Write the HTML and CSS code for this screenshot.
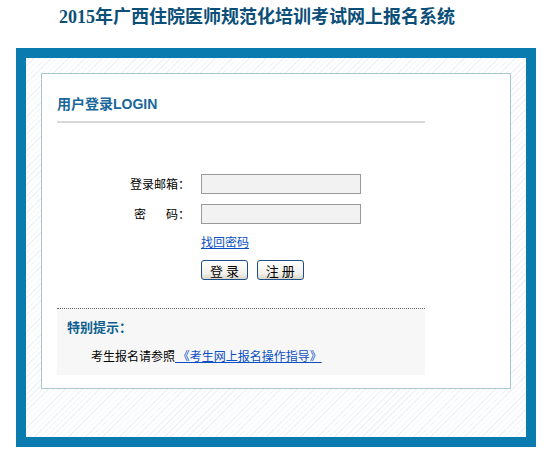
FILE: index.html
```html
<!DOCTYPE html>
<html lang="zh-CN">
<head>
  <meta charset="UTF-8" />
  <title>2015年广西住院医师规范化培训考试网上报名系统</title>
  <link rel="stylesheet" href="styles.css">
</head>
<body>

  <h1 class="title">2015年广西住院医师规范化培训考试网上报名系统</h1>

  <div class="frame">
    <div class="panel">
      <div class="box">
        <h2 class="box-head">用户登录LOGIN</h2>

        <form class="login">
          <div class="row">
            <label for="email">登录邮箱：</label>
            <input type="text" id="email" />
          </div>
          <div class="row">
            <label for="pwd" class="spread">密<span class="gap"></span>码：</label>
            <input type="password" id="pwd" />
          </div>
          <div class="row forgot">
            <span></span>
            <a href="#" class="link">找回密码</a>
          </div>
          <div class="row buttons">
            <span></span>
            <div>
              <button type="button" class="btn">登 录</button>
              <button type="button" class="btn">注 册</button>
            </div>
          </div>
        </form>

        <div class="notice">
          <h3>特别提示：</h3>
          <p>考生报名请参照<a href="#" class="link"> 《考生网上报名操作指导》 </a></p>
        </div>
      </div>
    </div>
  </div>

</body>
</html>
```

FILE: styles.css
```css
body {
  margin: 0;
  background: #fff;
  color: #000;
  font-family: "Noto Sans CJK SC", sans-serif;
  font-size: 12px;
}

.title {
  margin: 0;
  padding: 6px 46px 0 0;
  height: 42px;
  line-height: 22px;
  text-align: center;
  font-family: "Liberation Serif", "Noto Sans CJK SC", serif;
  font-size: 18px;
  font-weight: bold;
  color: #0b4f78;
}

.frame {
  box-sizing: border-box;
  width: 520px;
  margin-left: 16px;
  border: 10px solid #0a7bae;
  padding: 15px 15px 48px;
  background: repeating-linear-gradient(-45deg, #fff 0, #fff 3px, #edf3f9 3px, #edf3f9 4px);
}

.panel {
  background: #fff;
  border: 1px solid #a9c6d2;
  height: 314px;
}

.box {
  width: 368px;
  margin-left: 15px;
}

.box-head {
  margin: 0;
  padding-top: 20px;
  height: 27px;
  line-height: 20px;
  font-family: "Liberation Sans", "Noto Sans CJK SC", sans-serif;
  font-size: 14px;
  font-weight: bold;
  color: #17679a;
  border-bottom: 2px solid #d9d9d9;
}

.login {
  padding-top: 51px;
  height: 134px;
}

.row {
  display: grid;
  grid-template-columns: 133px 1fr;
  gap: 11px;
  align-items: center;
  margin-bottom: 10px;
}

.row label {
  text-align: right;
  line-height: 20px;
}

.spread .gap {
  display: inline-block;
  width: 20px;
}

.row input {
  box-sizing: border-box;
  width: 160px;
  height: 20px;
  border: 1px solid #9a9a9a;
  background: #f2f2f2;
  margin: 0;
}

.link {
  color: #0a4fc4;
  text-decoration: underline;
}

.forgot .link {
  line-height: 16px;
}

.buttons {
  margin-top: 4px;
}

.btn {
  box-sizing: border-box;
  height: 20px;
  width: 47px;
  padding: 0;
  margin-right: 6px;
  font-family: "Noto Sans CJK SC", sans-serif;
  font-size: 13px;
  color: #000;
  border: 1px solid #1c4f8a;
  border-radius: 3px;
  background: linear-gradient(#ffffff, #f1f0ea 70%, #d9d6c8);
}

.notice {
  border-top: 1px dotted #666;
  background: #f7f7f7;
  padding: 9px 10px 0;
  height: 57px;
}

.notice h3 {
  margin: 0;
  line-height: 18px;
  font-size: 13px;
  font-weight: bold;
  color: #0c5f8f;
}

.notice p {
  margin: 11px 0 0 24px;
  line-height: 18px;
}
```
